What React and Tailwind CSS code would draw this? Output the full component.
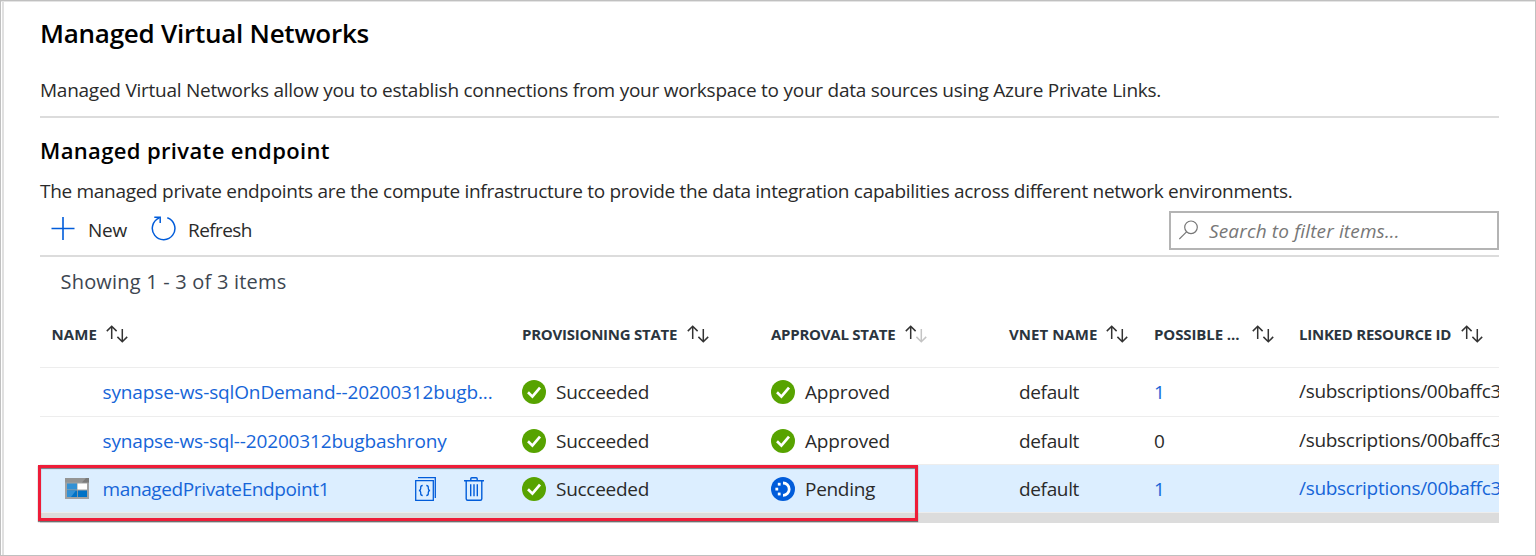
const COLS = "grid grid-cols-[482px_249px_238px_145px_145px_200px] items-center";

function SortIcon({ faded }) {
  return (
    <svg width="22" height="18" viewBox="0 0 22 18" fill="none" strokeWidth="1.5" className="shrink-0">
      <path d="M5.7 14V1.2M.8 6.1l4.9-4.9 4.9 4.9" stroke="#333" />
      <path d="M16.3 4v12.8M11.4 11.9l4.9 4.9 4.9-4.9" stroke={faded ? "#c4c4c4" : "#333"} />
    </svg>
  );
}

function CheckIcon() {
  return (
    <svg width="24" height="24" viewBox="0 0 24 24" fill="none" className="shrink-0">
      <circle cx="12" cy="12" r="12" fill="#57a300" />
      <path d="M6 12.3l4.4 4.3 7.6-9" stroke="#fff" strokeWidth="2.7" />
    </svg>
  );
}

function PendingIcon() {
  return (
    <svg width="24" height="24" viewBox="0 0 24 24" fill="none" className="shrink-0">
      <circle cx="12" cy="12" r="12" fill="#015cda" />
      <path d="M12 6a6.2 6.2 0 0 1 0 12.4" stroke="#fff" strokeWidth="2.8" />
      <rect x="6.8" y="5.8" width="2.8" height="2.8" fill="#fff" />
      <rect x="4.4" y="10.7" width="2.8" height="2.8" fill="#fff" />
      <rect x="6.8" y="15.6" width="2.8" height="2.8" fill="#fff" />
    </svg>
  );
}

function EndpointIcon() {
  return (
    <svg width="24" height="21" viewBox="0 0 24 21" className="shrink-0">
      <path d="M0 0h24v21H0z" fill="#a0a1a2" />
      <path d="M0 0h24v4.5H0z" fill="#949494" />
      <path d="M21 0h3v4.5h-7z" fill="#7a7a7a" />
      <path d="M2 5.5h10v6H2z" fill="#3391d5" />
      <path d="M12.5 5.5H22v6h-9.5z" fill="#fff" />
      <path d="M2 12.5h10V19H2zM12.800 12.5H22V19h-9.200z" fill="#0072c6" />
      <path d="M2 12.5h9L6 19H2z" fill="#3391d5" />
    </svg>
  );
}

function CodeIcon() {
  return (
    <svg width="22" height="24" viewBox="0 0 22 24" fill="none" stroke="#015cda" strokeWidth="1.3" className="shrink-0">
      <path d="M.7 3.7h17.6v19.6H.7z" />
      <path d="M3 .7h17.300v20.300" />
      <path d="M7.700 8.500c-1.700 0-2 .6-2 2v1.300c0 1-.5 1.500-1.700 1.700 1.200.2 1.700.7 1.700 1.700v1.300c0 1.400.3 2 2 2M11.300 8.500c1.700 0 2 .6 2 2v1.300c0 1 .5 1.500 1.700 1.700-1.200.2-1.700.7-1.700 1.700v1.300c0 1.400-.3 2-2 2" />
    </svg>
  );
}

function TrashIcon() {
  return (
    <svg width="20" height="24" viewBox="0 0 20 24" fill="none" stroke="#015cda" strokeWidth="1.4" className="shrink-0">
      <path d="M0 3.800h20M6.800 3.500V1.700q0-1 1-1h4.400q1 0 1 1v1.800" />
      <path d="M2.200 4v17.800q0 1.500 1.500 1.500h12.600q1.500 0 1.500-1.500V4" />
      <path d="M6.700 7.200v12M10 7.200v12M13.300 7.200v12" />
    </svg>
  );
}

const headers = [
  { label: "NAME", cls: "pl-[11.5px] gap-2", text: "w-[46px] tracking-[0.1px]" },
  { label: "PROVISIONING STATE", cls: "gap-[9px]", text: "w-[156px] tracking-[-0.25px]" },
  { label: "APPROVAL STATE", cls: "gap-[9px]", text: "w-[125px] tracking-[-0.25px]", faded: true },
  { label: "VNET NAME", cls: "gap-[9px]", text: "w-[88px] tracking-[0.05px]" },
  { label: "POSSIBLE ...", cls: "gap-[13px]", text: "w-[85px] tracking-[-0.1px]" },
  { label: "LINKED RESOURCE ID", cls: "gap-[9px]", text: "w-[153px] tracking-[-0.25px]" },
];

const rows = [
  { name: "synapse-ws-sqlOnDemand--20200312bugb...", track: "tracking-[-0.135px]", state: "Approved", count: "1", height: "h-[49px]" },
  { name: "synapse-ws-sql--20200312bugbashrony", track: "tracking-[-0.16px]", state: "Approved", count: "0", height: "h-[48px]" },
  { name: "managedPrivateEndpoint1", track: "tracking-[-0.38px]", state: "Pending", count: "1", height: "h-[48px]", selected: true },
];

function Row({ row }) {
  return (
    <div className={`${COLS} ${row.height} border-b border-[#ededed] ${row.selected ? "bg-[#dceeff]" : ""}`}>
      <div className="flex items-center text-[#1665d8]">
        <div className="flex w-[62.5px] pl-[25px]">{row.selected && <EndpointIcon />}</div>
        <span className={`whitespace-nowrap ${row.track}`}>{row.name}</span>
        {row.selected && (
          <div className="ml-auto flex gap-[27px] pr-[38px]">
            <CodeIcon />
            <TrashIcon />
          </div>
        )}
      </div>
      <div className="flex items-center gap-[10px] tracking-[-0.28px]">
        <CheckIcon />
        <span>Succeeded</span>
      </div>
      <div className="flex items-center gap-[10px]">
        {row.selected ? <PendingIcon /> : <CheckIcon />}
        <span className={row.selected ? "tracking-[-0.3px]" : "tracking-[-0.15px]"}>{row.state}</span>
      </div>
      <div className="pl-[10px] tracking-[-0.35px]">default</div>
      <div className={row.count === "1" ? "text-[#1665d8]" : ""}>{row.count}</div>
      <div className={`overflow-hidden pb-[2px] whitespace-nowrap tracking-[-0.3px] ${row.selected ? "text-[#1665d8]" : ""}`}>
        /subscriptions/00baffc3
      </div>
    </div>
  );
}

export default function App() {
  return (
    <div className="h-[556px] w-[1536px] overflow-hidden border border-[#c0c0c0] bg-white font-['Open_Sans',sans-serif] text-[19px] leading-[28px] text-[#2a2a2a]">
      <div className="h-full border-t border-[#e4e4e4] pl-px">
        <div className="h-full border-l-2 border-[#e0e0e0] pt-[16px] pr-9 pl-9">
          <h1 className="h-[30px] text-[26px] leading-[30px] font-semibold tracking-[-0.25px] text-black">Managed Virtual Networks</h1>
          <p className="mt-[28px] border-b-2 border-[#dcdcdc] pb-[12px] tracking-[-0.249px] whitespace-nowrap">
            Managed Virtual Networks allow you to establish connections from your workspace to your data sources using Azure Private Links.
          </p>
          <h2 className="mt-[17px] h-[30px] text-[22px] leading-[30px] font-semibold tracking-[0.36px] text-black">Managed private endpoint</h2>
          <p className="mt-[12px] tracking-[-0.298px] whitespace-nowrap">
            The managed private endpoints are the compute infrastructure to provide the data integration capabilities across different network environments.
          </p>

          <div className="mt-[6px] flex h-[46px] items-start justify-between border-b-2 border-[#dcdcdc]">
            <div className="flex h-[38px] items-center pl-[11px]">
              <svg width="24" height="23" viewBox="0 0 24 23" stroke="#015cda" strokeWidth="1.6" className="mb-[3px]">
                <path d="M12 0v23M.5 11.5h23" />
              </svg>
              <span className="ml-[13px] w-[63px] tracking-[-0.23px]">New</span>
              <svg width="25" height="25" viewBox="0 0 25 25" fill="none" stroke="#015cda" strokeWidth="1.5" className="mb-[3px]">
                <path d="M16.3 1.7A11.3 11.3 0 1 1 8.4 1.900" />
                <path d="M3.300 1.200h5.900v5.800" />
              </svg>
              <span className="ml-[12px] tracking-[-0.6px]">Refresh</span>
            </div>
            <div className="flex h-[39px] w-[330px] items-center border-2 border-[#b4b4b4] pl-2">
              <svg width="20" height="20" viewBox="0 0 20 20" fill="none" stroke="#767676" strokeWidth="1.2" className="mb-px">
                <circle cx="12" cy="7.300" r="6.300" />
                <path d="M7.500 11.800L.3 19" />
              </svg>
              <span className="ml-[10px] text-[#777] italic tracking-[0.15px]">Search to filter items...</span>
            </div>
          </div>

          <div className="mt-[11px] pl-[20.500px] text-[20px] tracking-[0.2px] text-[#3d4650]">Showing 1 - 3 of 3 items</div>

          <div className={`${COLS} mt-[6px] h-[66px] border-b border-[#ededed] pb-[2px] text-[15px] leading-[20px] font-bold text-[#2b353e]`}>
            {headers.map((h) => (
              <div key={h.label} className={`flex items-center ${h.cls}`}>
                <span className={`whitespace-nowrap ${h.text}`}>{h.label}</span>
                <SortIcon faded={h.faded} />
              </div>
            ))}
          </div>

          <div className="relative">
            {rows.map((row) => (
              <Row key={row.name} row={row} />
            ))}
            <div className="h-[10px] bg-[#dcdcdc]" />
            <div className="absolute top-[97px] -left-[2px] h-[56px] w-[880px] border-[3px] border-[#ee1c38] shadow-[0_1px_1px_rgba(0,0,0,0.5),inset_0_1px_1px_rgba(0,0,0,0.5)]" />
          </div>
        </div>
      </div>
    </div>
  );
}
